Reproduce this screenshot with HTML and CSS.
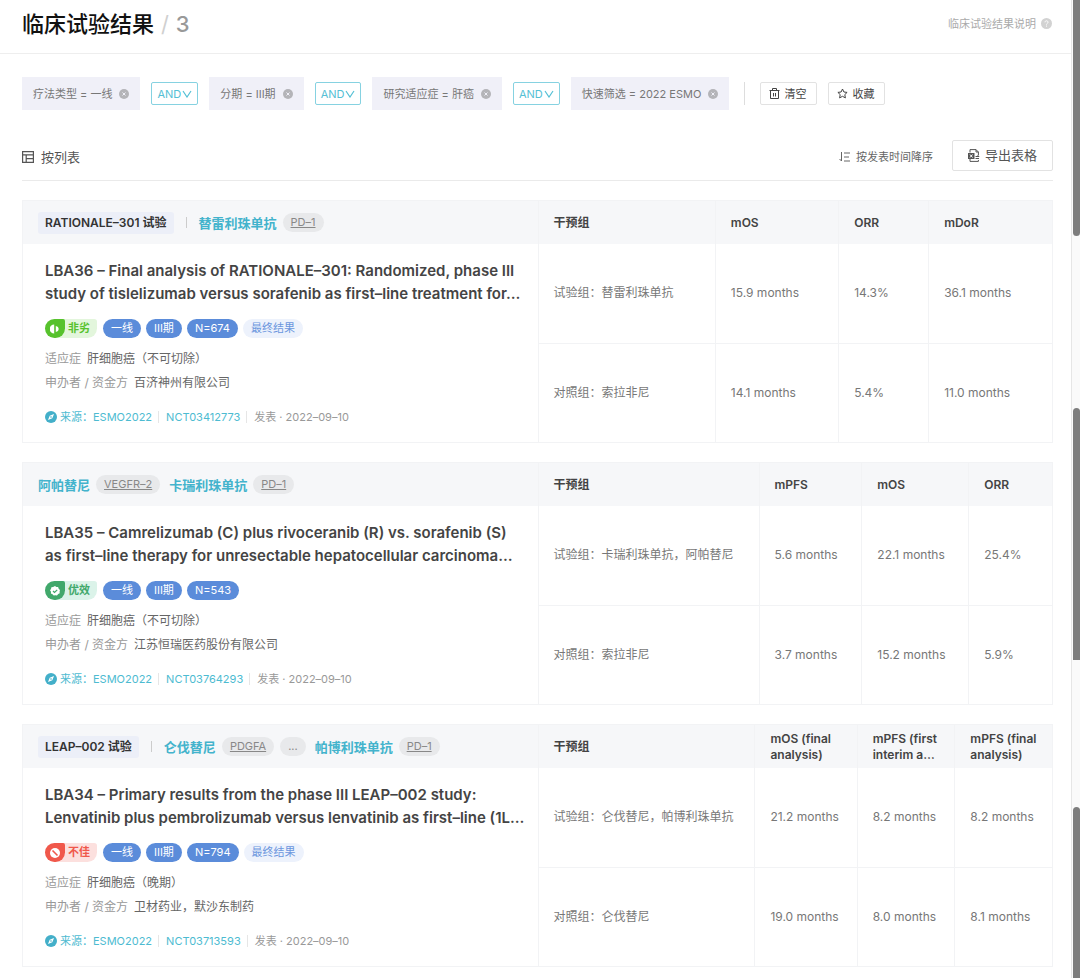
FILE: index.html
```html
<!DOCTYPE html>
<html lang="zh-CN">
<head>
    <meta charset="UTF-8">
    <meta name="viewport" content="width=device-width, initial-scale=1.0">
    <title>临床试验结果</title>
    <link rel="stylesheet" href="styles.css">
</head>
<body>
    <!-- shared icons -->
    <svg class="sprite" aria-hidden="true">
        <symbol id="close" viewBox="0 0 10 10"><circle cx="5" cy="5" r="5" fill="#b4b4b8"/><path d="M3.5 3.5l3 3M6.5 3.5l-3 3" stroke="#f0f0f8" fill="none"/></symbol>
        <symbol id="chevron" viewBox="0 0 10 8"><path d="M1 1l4 6 4-6" stroke="currentColor" stroke-width="1.2" fill="none"/></symbol>
        <symbol id="compass" viewBox="0 0 12 12"><circle cx="6" cy="6" r="6" fill="#43afc9"/><path d="M9 3L7.3 7.3 3 9l1.7-4.3z" fill="#fff"/><circle cx="6" cy="6" r=".8" fill="#43afc9"/></symbol>
    </svg>

    <div class="layout">
        <main class="page">
            <header class="top">
                <h1>临床试验结果 <span class="slash">/</span> <span class="count">3</span></h1>
                <a class="help" href="#">临床试验结果说明
                    <svg width="11" height="11" viewBox="0 0 11 11"><circle cx="5.5" cy="5.5" r="5.5" fill="#d2d2d2"/><path d="M4 4.3c0-2 3-2 3 0 0 1.2-1.5 1-1.5 2.3M5.5 7.6v1" stroke="#fff" fill="none"/></svg>
                </a>
            </header>

            <div class="content">
                <div class="filters">
                    <span class="filter">疗法类型 = 一线 <button class="remove" aria-label="移除"><svg width="10" height="10"><use href="#close"/></svg></button></span>
                    <button class="and">AND<svg width="10" height="8"><use href="#chevron"/></svg></button>
                    <span class="filter">分期 = III期 <button class="remove" aria-label="移除"><svg width="10" height="10"><use href="#close"/></svg></button></span>
                    <button class="and">AND<svg width="10" height="8"><use href="#chevron"/></svg></button>
                    <span class="filter">研究适应症 = 肝癌 <button class="remove" aria-label="移除"><svg width="10" height="10"><use href="#close"/></svg></button></span>
                    <button class="and">AND<svg width="10" height="8"><use href="#chevron"/></svg></button>
                    <span class="filter">快速筛选 = 2022 ESMO <button class="remove" aria-label="移除"><svg width="10" height="10"><use href="#close"/></svg></button></span>
                    <span class="split"></span>
                    <button class="small-btn"><svg width="11" height="11" viewBox="0 0 11 11"><path d="M.5 2.5h10M3.5 2.5v-2h4v2M1.5 2.5v8h8v-8M4.5 5v3.5M6.5 5v3.5" stroke="currentColor" fill="none"/></svg>清空</button>
                    <button class="small-btn"><svg width="11" height="11" viewBox="0 0 11 11"><path d="M5.5 1l1.4 3 3.2.4-2.3 2.2.6 3.3-2.9-1.6-2.9 1.6.6-3.3L.9 4.4 4.1 4z" stroke="currentColor" fill="none"/></svg>收藏</button>
                </div>

                <div class="toolbar">
                    <div class="view"><svg width="12" height="12" viewBox="0 0 12 12"><path d="M.6.6h10.8v10.8H.6zM.6 3.8h10.8M4.2 3.8v7.6M4.2 7.6h7.2" stroke="currentColor" stroke-width="1.2" fill="none"/></svg>按列表</div>
                    <div class="actions">
                        <button class="sort"><svg width="11" height="10" viewBox="0 0 11 10"><path d="M2.5 0v9L.5 7M5 1h6M5 5h5M5 9h6" stroke="currentColor" fill="none"/></svg>按发表时间降序</button>
                        <button class="export"><svg width="12" height="13" viewBox="0 0 12 13"><path d="M2 3.5V.6h6L10.4 3v3M8 .6V3h2.400M2 10v2.400h8.400V11M7.500 7.500H11M7.500 9.500H11M9.500 6l1.500 1.500" stroke="currentColor" fill="none"/><path d="M0 4h6.500v6H0z" fill="currentColor"/><path d="M2 5.500l2.500 3M4.500 5.500L2 8.500" stroke="#fff"/></svg>导出表格</button>
                    </div>
                </div>

                <article class="card">
                    <section class="info">
                        <div class="card-head">
                            <span class="trial">RATIONALE–301 试验</span><span class="bar"></span>
                            <a class="drug" href="#">替雷利珠单抗</a><a class="target" href="#">PD–1</a>
                        </div>
                        <div class="card-body">
                            <h2>LBA36 – Final analysis of RATIONALE–301: Randomized, phase III<br>study of tislelizumab versus sorafenib as first–line treatment for…</h2>
                            <div class="tags">
                                <span class="verdict similar"><i><svg width="10" height="10" viewBox="0 0 10 10"><path d="M4.2.5v9a4.500 4.500 0 0 1 0-9zM5.8 2c3.800.5 3.800 5.500 0 6z" fill="#fff"/></svg></i>非劣</span>
                                <span class="tag">一线</span><span class="tag">III期</span><span class="tag">N=674</span><span class="tag final">最终结果</span>
                            </div>
                            <p class="meta"><span>适应症</span>肝细胞癌（不可切除）</p>
                            <p class="meta"><span>申办者 / 资金方</span>百济神州有限公司</p>
                            <div class="source">
                                <svg width="12" height="12"><use href="#compass"/></svg><a href="#">来源：ESMO2022</a><a href="#">NCT03412773</a><span>发表 · 2022–09–10</span>
                            </div>
                        </div>
                    </section>
                    <table class="results">
                        <colgroup><col style="width:34.5%"><col style="width:24%"><col style="width:17.5%"><col></colgroup>
                        <thead><tr><th>干预组</th><th>mOS</th><th>ORR</th><th>mDoR</th></tr></thead>
                        <tbody>
                            <tr><td>试验组：替雷利珠单抗</td><td>15.9 months</td><td>14.3%</td><td>36.1 months</td></tr>
                            <tr><td>对照组：索拉非尼</td><td>14.1 months</td><td>5.4%</td><td>11.0 months</td></tr>
                        </tbody>
                    </table>
                </article>

                <article class="card">
                    <section class="info">
                        <div class="card-head">
                            <a class="drug" href="#">阿帕替尼</a><a class="target" href="#">VEGFR–2</a>
                            <a class="drug" href="#">卡瑞利珠单抗</a><a class="target" href="#">PD–1</a>
                        </div>
                        <div class="card-body">
                            <h2>LBA35 – Camrelizumab (C) plus rivoceranib (R) vs. sorafenib (S)<br>as first–line therapy for unresectable hepatocellular carcinoma…</h2>
                            <div class="tags">
                                <span class="verdict better"><i><svg width="10" height="10" viewBox="0 0 10 10"><path d="M5 0l1.400 1 1.700.1.600 1.600L10 4l-.4 1.600.1 1.700-1.500.8L7 9.500l-1.600-.3L3.700 9.500l-1.200-1.300-1.600-.7.1-1.700L0 4.300l1-1.400.4-1.700L3.100 1z" fill="#fff"/><path d="M3 5l1.500 1.500L7.200 3.800" stroke="#41a86b" stroke-width="1.2" fill="none"/></svg></i>优效</span>
                                <span class="tag">一线</span><span class="tag">III期</span><span class="tag">N=543</span>
                            </div>
                            <p class="meta"><span>适应症</span>肝细胞癌（不可切除）</p>
                            <p class="meta"><span>申办者 / 资金方</span>江苏恒瑞医药股份有限公司</p>
                            <div class="source">
                                <svg width="12" height="12"><use href="#compass"/></svg><a href="#">来源：ESMO2022</a><a href="#">NCT03764293</a><span>发表 · 2022–09–10</span>
                            </div>
                        </div>
                    </section>
                    <table class="results">
                        <colgroup><col style="width:43%"><col style="width:20%"><col style="width:20.8%"><col></colgroup>
                        <thead><tr><th>干预组</th><th>mPFS</th><th>mOS</th><th>ORR</th></tr></thead>
                        <tbody>
                            <tr><td>试验组：卡瑞利珠单抗，阿帕替尼</td><td>5.6 months</td><td>22.1 months</td><td>25.4%</td></tr>
                            <tr><td>对照组：索拉非尼</td><td>3.7 months</td><td>15.2 months</td><td>5.9%</td></tr>
                        </tbody>
                    </table>
                </article>

                <article class="card">
                    <section class="info">
                        <div class="card-head">
                            <span class="trial">LEAP–002 试验</span><span class="bar"></span>
                            <a class="drug" href="#">仑伐替尼</a><a class="target" href="#">PDGFA</a><button class="target more">...</button>
                            <a class="drug" href="#">帕博利珠单抗</a><a class="target" href="#">PD–1</a>
                        </div>
                        <div class="card-body">
                            <h2>LBA34 – Primary results from the phase III LEAP–002 study:<br>Lenvatinib plus pembrolizumab versus lenvatinib as first–line (1L…</h2>
                            <div class="tags">
                                <span class="verdict worse"><i><svg width="10" height="10" viewBox="0 0 10 10"><circle cx="5" cy="5" r="5" fill="#fff"/><path d="M2.5 2.5l5 5" stroke="#f0584b" stroke-width="1.6"/></svg></i>不佳</span>
                                <span class="tag">一线</span><span class="tag">III期</span><span class="tag">N=794</span><span class="tag final">最终结果</span>
                            </div>
                            <p class="meta"><span>适应症</span>肝细胞癌（晚期）</p>
                            <p class="meta"><span>申办者 / 资金方</span>卫材药业，默沙东制药</p>
                            <div class="source">
                                <svg width="12" height="12"><use href="#compass"/></svg><a href="#">来源：ESMO2022</a><a href="#">NCT03713593</a><span>发表 · 2022–09–10</span>
                            </div>
                        </div>
                    </section>
                    <table class="results">
                        <colgroup><col style="width:42.2%"><col style="width:19.9%"><col style="width:19%"><col></colgroup>
                        <thead><tr><th>干预组</th><th>mOS (final analysis)</th><th>mPFS (first interim a…</th><th>mPFS (final analysis)</th></tr></thead>
                        <tbody>
                            <tr><td>试验组：仑伐替尼，帕博利珠单抗</td><td>21.2 months</td><td>8.2 months</td><td>8.2 months</td></tr>
                            <tr><td>对照组：仑伐替尼</td><td>19.0 months</td><td>8.0 months</td><td>8.1 months</td></tr>
                        </tbody>
                    </table>
                </article>
            </div>
        </main>

        <div class="rail">
            <span class="thumb first"></span>
            <span class="thumb second"></span>
            <span class="thumb third"></span>
        </div>
    </div>
</body>
</html>
```
FILE: styles.css
```css
* {
    box-sizing: border-box;
}
body {
    margin: 0;
    background: #fff;
    color: #666;
    font-family: Inter, "Noto Sans CJK SC", sans-serif;
    font-size: 12px;
    line-height: 16px;
}
h1, h2, p {
    margin: 0;
}
a {
    color: inherit;
    text-decoration: none;
}
button {
    font: inherit;
    color: inherit;
    background: none;
    border: 0;
    padding: 0;
    cursor: pointer;
}
svg {
    flex: none;
}
.sprite {
    display: none;
}
.layout {
    display: flex;
    height: 100vh;
    overflow: hidden;
}
.page {
    flex: 1;
    min-width: 0;
}
.top {
    display: flex;
    justify-content: space-between;
    align-items: center;
    height: 54px;
    padding: 0 19px 6px 22px;
    border-bottom: 1px solid #eee;
}
h1 {
    color: #111;
    font-size: 22px;
    line-height: 32px;
    font-weight: 500;
}
.slash {
    margin: 0 1px;
    color: #d0d0d0;
    font-weight: 400;
}
.count {
    color: #999;
}
.help {
    display: flex;
    align-items: center;
    gap: 5px;
    color: #aaa;
    font-size: 11px;
}
.content {
    padding: 23px 18px 0 22px;
}
.filters {
    display: flex;
    align-items: center;
    gap: 11px;
}
.filter {
    display: flex;
    align-items: center;
    gap: 7px;
    height: 33px;
    padding: 0 11px;
    background: #f0f0f8;
    color: #777;
    font-size: 11px;
    white-space: nowrap;
}
.remove {
    display: flex;
}
.and {
    display: flex;
    align-items: center;
    gap: 1px;
    height: 23px;
    padding: 0 5px;
    border: 1px solid #86d2e1;
    border-radius: 2px;
    color: #55c0d5;
    font-size: 11px;
}
.split {
    width: 1px;
    height: 23px;
    margin: 0 4px;
    background: #ddd;
}
.small-btn {
    display: flex;
    align-items: center;
    gap: 4px;
    height: 23px;
    padding: 0 10px 0 8px;
    border: 1px solid #e2e2e2;
    border-radius: 2px;
    color: #444;
    font-size: 11px;
}
.toolbar {
    display: flex;
    justify-content: space-between;
    align-items: center;
    height: 51px;
    margin: 20px 0 19px;
    border-bottom: 1px solid #eaeaea;
}
.view {
    display: flex;
    align-items: center;
    gap: 7px;
    padding-top: 3px;
    color: #555;
    font-size: 13px;
}
.actions {
    display: flex;
    align-items: center;
    gap: 19px;
}
.sort {
    display: flex;
    align-items: center;
    gap: 6px;
    padding-top: 3px;
    font-size: 11px;
}
.export {
    display: flex;
    align-items: center;
    gap: 5px;
    height: 31px;
    padding: 0 15px;
    border: 1px solid #e2e2e2;
    border-radius: 2px;
    color: #555;
    font-size: 13px;
}
.card {
    display: grid;
    grid-template-columns: 1fr 1fr;
    margin-bottom: 19px;
    border: 1px solid #f2f3f5;
}
.card-head {
    display: flex;
    align-items: center;
    gap: 6px;
    height: 43px;
    padding: 0 15px;
    background: #f6f7f9;
}
.trial {
    padding: 3px 7px;
    border-radius: 3px;
    background: #eceff8;
    color: #333;
    font-weight: 600;
}
.bar {
    width: 1px;
    height: 11px;
    margin: 0 6px;
    background: #ccc;
}
.drug {
    color: #43b3cc;
    font-size: 13px;
    font-weight: 600;
}
.target {
    padding: 1px 8px;
    border-radius: 10px;
    background: #e8e9eb;
    color: #888;
    font-size: 11px;
    line-height: 17px;
    text-decoration: underline;
}
.target + .drug {
    margin-left: 3px;
}
.more {
    text-decoration: none;
}
.card-body {
    padding: 15px 0 0 22px;
}
h2 {
    color: #444;
    font-size: 15px;
    line-height: 23px;
    font-weight: 600;
    white-space: nowrap;
}
.tags {
    display: flex;
    gap: 5px;
    margin: 14px 0 9px;
    font-size: 11px;
    line-height: 19px;
}
.tag {
    padding: 0 8px;
    border-radius: 10px;
    background: #5b8cda;
    color: #fff;
}
.final {
    background: #edf2fc;
    color: #6b96de;
}
.verdict {
    display: flex;
    padding-right: 7px;
    margin-right: 1px;
    border-radius: 10px 3px 10px 10px;
    font-weight: 600;
}
.verdict i {
    display: flex;
    align-items: center;
    width: 20px;
    margin-right: 3px;
    padding-left: 5px;
    border-radius: 10px 2px 10px 10px;
}
.similar {
    background: #e3f6dc;
    color: #57c22d;
}
.similar i {
    background: #57c22d;
}
.better {
    background: #dbf3e9;
    color: #41a86b;
}
.better i {
    background: #41a86b;
}
.worse {
    background: #fce0de;
    color: #f0584b;
}
.worse i {
    background: #f0584b;
}
.meta {
    line-height: 24px;
}
.meta span {
    margin-right: 6px;
    color: #999;
}
.source {
    display: flex;
    align-items: center;
    margin-top: 16px;
    color: #999;
    font-size: 11px;
    line-height: 12px;
}
.source svg {
    margin-right: 3px;
}
.source a {
    margin-right: 7px;
    padding-right: 6px;
    border-right: 1px solid #e6e6e6;
    color: #4dbbd1;
}
.results {
    width: 100%;
    table-layout: fixed;
    border-collapse: collapse;
    color: #777;
}
.results th, .results td {
    padding: 0 15px;
    border-left: 1px solid #f2f3f5;
    text-align: left;
}
.results th {
    height: 43px;
    padding-right: 10px;
    background: #f6f7f9;
    color: #444;
    font-weight: 600;
}
.results td {
    height: 99px;
    white-space: nowrap;
}
.results tr + tr td {
    border-top: 1px solid #f2f3f5;
}
.rail {
    display: flex;
    flex-direction: column;
    width: 9px;
    padding-left: 1px;
    background: #fafafa;
    border-left: 1px solid #e6e6e6;
}
.thumb {
    background: #7d7d7d;
}
.first {
    flex: 236;
    border-radius: 0 0 4px 4px;
}
.second {
    flex: 252;
    margin-top: 172px;
    border-radius: 4px 4px 0 0;
}
.third {
    flex: 171;
    margin-top: 147px;
    border-radius: 4px 4px 0 0;
}
```
